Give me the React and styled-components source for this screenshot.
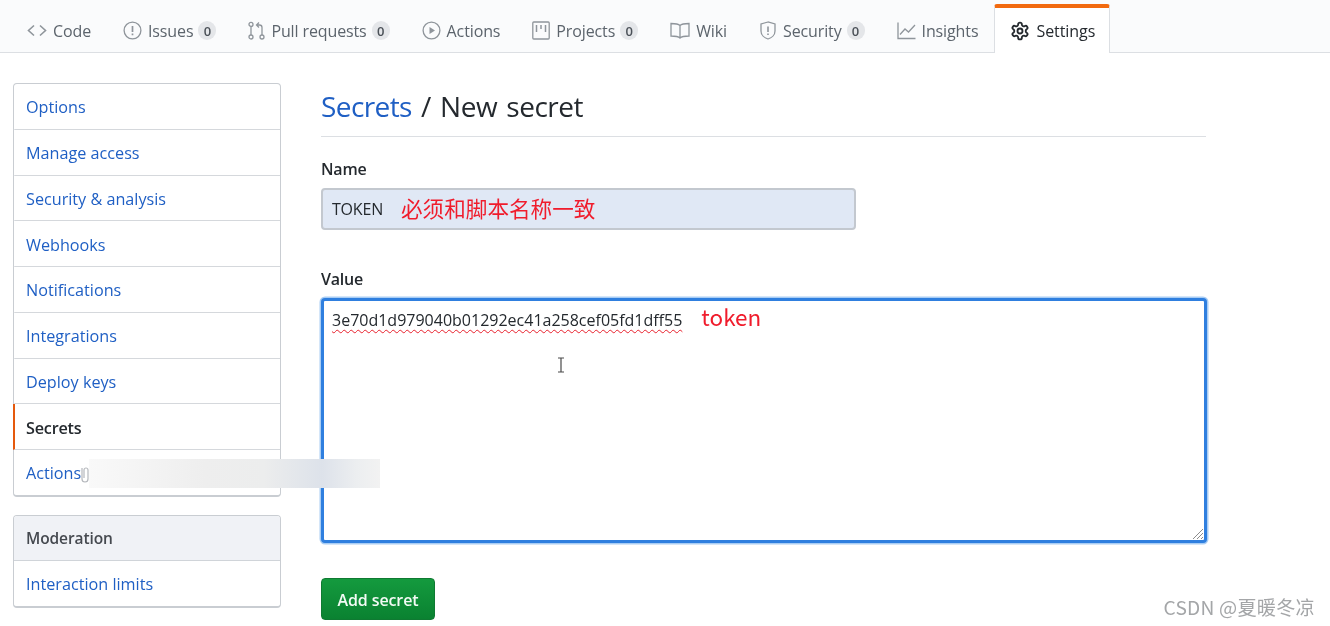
import React from "react";
import styled, { createGlobalStyle } from "styled-components";

const Global = createGlobalStyle`
  html, body { margin: 0; padding: 0; background: #fff; }
  body { width: 1330px; height: 626px; overflow: hidden; font-family: "Open Sans", "Noto Sans CJK SC", sans-serif; }
  * { box-sizing: border-box; }
`;
const Page = styled.div`position: relative; width: 1330px; height: 626px; overflow: hidden; background: #fff; filter: blur(.35px);`;
const TabBar = styled.nav`
  display: flex; align-items: flex-end; height: 53px; padding-left: 11px;
  background: #fafbfc; border-bottom: 1px solid #dcdfe3;
`;
const Tab = styled.div`
  display: flex; align-items: center; height: ${p => p.$active ? "49px" : "52px"};
  padding: ${p => p.$active ? "0 14px 0 15px" : "9px 16px 0"}; gap: 5px;
  margin-bottom: ${p => p.$active ? "-1px" : "0"};
  font-size: 16px; letter-spacing: ${p => p.$active ? "-.05px" : "-.12px"}; color: ${p => p.$active ? "#24292e" : "#5c646c"};
  background: ${p => p.$active ? "#fff" : "transparent"};
  border: ${p => p.$active ? "1px solid #dcdfe3" : "0"};
  border-top: ${p => p.$active ? "4px solid #f26a0f" : "0"};
  border-bottom: 0; border-radius: ${p => p.$active ? "3px 3px 0 0" : "0"};
`;
const TabIcon = styled.svg`width: ${p => p.$w || 19}px; height: ${p => p.$active ? 20 : 19}px; flex: none; color: ${p => p.$active ? "#24292e" : "#8f959b"}; margin-right: 1px;`;
const Badge = styled.span`
  display: inline-flex; align-items: center; justify-content: center; width: 18px; height: 19px;
  border-radius: 10px; background: #e4e6e9; color: #4b5158; font-size: 13px; font-weight: 600; letter-spacing: 0;
`;
const Body = styled.div`display: flex; align-items: flex-start; padding: 30px 0 0 13px; gap: 40px;`;
const Side = styled.aside`display: flex; flex-direction: column; gap: 18px; width: 268px; flex: none;`;
const Menu = styled.div`border: 1px solid #c9cdd2; border-bottom-width: 2px; border-radius: 4px; background: #fff;`;
const MenuHead = styled.div`
  height: 45px; padding: 0 12px; display: flex; align-items: center; background: #f0f2f6;
  font-size: 15.5px; font-weight: 600; letter-spacing: -.1px; color: #45494f; border-bottom: 1px solid #d0d4d9; border-radius: 3px 3px 0 0;
`;
const MenuItem = styled.div`
  height: ${p => p.$last ? 45 : 45.75}px; padding: ${p => p.$last ? "0" : "2px"} 11px 0; display: flex; align-items: center;
  font-size: 16.2px; font-weight: ${p => p.$active ? 600 : 400}; letter-spacing: ${p => p.$active ? "-.2px" : "0"};
  color: ${p => p.$active ? "#24292e" : "#1f5fc4"};
  border-bottom: ${p => p.$last ? "0" : "1px solid #d5d8dc"};
  border-left: 2px solid ${p => p.$active ? "#e5590d" : "transparent"};
  margin-left: -1px;
`;
const Main = styled.main`width: 885px; flex: none; display: flex; flex-direction: column; align-items: flex-start;`;
const Title = styled.h1`
  width: 100%; margin: 0 0 22px; padding: 0 0 10px; height: 54px; line-height: 47px; font-size: 28px; font-weight: 400;
  letter-spacing: -.5px; word-spacing: 2.5px; color: #24292e; border-bottom: 1px solid #dcdfe3;
`;
const TitleLink = styled.span`color: #1f5fc4; letter-spacing: -.6px;`;
const Label = styled.div`font-size: 16px; font-weight: 600; letter-spacing: -.2px; color: #24292e; line-height: 20px; height: 20px; margin-bottom: 9px;`;
const NameField = styled.div`
  width: 535px; height: 42px; margin-bottom: 39px; padding: 0 9px; display: flex; align-items: center;
  background: #e0e8f5; border: 2px solid #c3c8cf; border-radius: 4px; font-size: 16px; letter-spacing: -.2px; color: #24292e;
`;
const Note = styled.span`
  color: #f01c2c; font-family: "Noto Sans CJK SC", sans-serif; font-size: ${p => p.$size || 21.6}px; letter-spacing: 0;
  margin: ${p => p.$mt || 0}px 0 ${p => p.$mb || 0}px ${p => p.$gap}px; line-height: 1;
`;
const ValueField = styled.div`
  position: relative; width: 886px; height: 245px; padding: 7px 8px; margin-bottom: 35px; display: flex; align-items: flex-start;
  background: #fff; border: 3px solid #2f7fdf; border-radius: 4px;
  box-shadow: 0 0 0 1.5px #a9cdf4; font-size: 16px; color: #24292e;
`;
const Token = styled.span`text-decoration: underline wavy #e8202c 1px; text-underline-offset: 3px; line-height: 24px;`;
const Grip = styled.svg`position: absolute; right: 0; bottom: 0; width: 12px; height: 12px; color: #8c8c8c;`;
const Caret = styled.svg`position: absolute; left: 233px; top: 56px; width: 8px; height: 16px; color: #4a4a4a;`;
const Button = styled.div`
  width: 114px; height: 42px; padding-top: 1px; display: flex; align-items: center; justify-content: center;
  background: linear-gradient(#149a3e, #0a8231); border: 1px solid #0f7a32; border-radius: 4px;
  color: #f3fbf5; font-size: 16px; font-weight: 600; letter-spacing: -.1px;
`;
const BlurPatch = styled.div`
  position: absolute; left: 89px; top: 459px; width: 291px; height: 29px;
  background: linear-gradient(90deg, #f9f9f9, #eeeeee 40%, #eceded 60%, #dde2ea 80%, #eceef0 92%, #f2f2f2);
`;
const Clip = styled.svg`position: absolute; left: 80px; top: 465px; width: 10px; height: 20px; color: #b5b8bd;`;
const Watermark = styled.div`
  position: absolute; right: 15px; top: 596px; font-family: "Noto Sans CJK SC", sans-serif; font-size: 19.2px; letter-spacing: .2px; color: #a4a6a8; line-height: 22px;
`;

const S = { fill: "none", stroke: "currentColor", strokeWidth: 1.3 };
const icons = {
  code: <TabIcon $w={20} viewBox="0 0 20 19" {...S} strokeWidth={1.6}><path d="M7 4.5 1.5 9.5 7 14.5M13 4.5l5.5 5-5.5 5"/></TabIcon>,
  issue: <TabIcon viewBox="0 0 19 19" {...S}><circle cx="9.5" cy="9.5" r="8.4"/><path d="M9.5 5v6M9.5 12.6v1.6" strokeWidth="1.7"/></TabIcon>,
  pull: <TabIcon $w={17} viewBox="0 0 17 19" {...S}><circle cx="3" cy="3.4" r="2"/><circle cx="3" cy="16" r="2"/><circle cx="14" cy="16" r="2"/><path d="M3 5.4V14M14 14V6.5a2.5 2.5 0 0 0-2.5-2.5H9M11 1.5 8.5 4l2.5 2.5"/></TabIcon>,
  play: <TabIcon viewBox="0 0 19 19" {...S}><circle cx="9.5" cy="9.5" r="8.4"/><path d="M7.5 6v7l5.5-3.5z" fill="currentColor" stroke="none"/></TabIcon>,
  project: <TabIcon $w={18} viewBox="0 0 18 19" {...S}><rect x=".8" y="1" width="16.4" height="17" rx="1"/><path d="M4.5 4v7M9 4v4M13.500 4v7" strokeWidth="1.5"/></TabIcon>,
  book: <TabIcon $w={20} viewBox="0 0 20 19" {...S}><path d="M10 4.500C8.500 3 6 2.500 1 2.500V15c5 0 7.500.500 9 2 1.500-1.500 4-2 9-2V2.500c-5 0-7.500.500-9 2zM10 4.500V17"/></TabIcon>,
  shield: <TabIcon $w={18} viewBox="0 0 18 19" {...S}><path d="M9 1 2 3v7c0 4 3.500 7 7 8 3.500-1 7-4 7-8V3z"/><path d="M9 5.500v5.500M9 12.500v1.500" strokeWidth="1.600"/></TabIcon>,
  graph: <TabIcon $w={19} viewBox="0 0 19 19" {...S}><path d="M1 1.500V17.500H18.500"/><path d="M3 13.500 8 8l3.500 3 6.500-7"/></TabIcon>,
  gear: <TabIcon $active $w={20} viewBox="0 0 24 24" fill="none" stroke="currentColor" strokeWidth="2.2"><path d="M12.22 2h-.44a2 2 0 0 0-2 2v.18a2 2 0 0 1-1 1.730l-.43.25a2 2 0 0 1-2 0l-.15-.08a2 2 0 0 0-2.730.73l-.22.38a2 2 0 0 0 .73 2.730l.15.1a2 2 0 0 1 1 1.720v.51a2 2 0 0 1-1 1.740l-.15.09a2 2 0 0 0-.73 2.730l.22.38a2 2 0 0 0 2.730.73l.15-.08a2 2 0 0 1 2 0l.43.25a2 2 0 0 1 1 1.730V20a2 2 0 0 0 2 2h.44a2 2 0 0 0 2-2v-.18a2 2 0 0 1 1-1.730l.43-.25a2 2 0 0 1 2 0l.15.08a2 2 0 0 0 2.730-.73l.22-.39a2 2 0 0 0-.73-2.730l-.15-.08a2 2 0 0 1-1-1.740v-.5a2 2 0 0 1 1-1.740l.15-.09a2 2 0 0 0 .73-2.730l-.22-.38a2 2 0 0 0-2.730-.73l-.15.08a2 2 0 0 1-2 0l-.43-.25a2 2 0 0 1-1-1.730V4a2 2 0 0 0-2-2z"/><circle cx="12" cy="12" r="3"/></TabIcon>,
};

const tabs = [
  ["code", "Code"], ["issue", "Issues", 0], ["pull", "Pull requests", 0], ["play", "Actions"],
  ["project", "Projects", 0], ["book", "Wiki"], ["shield", "Security", 0], ["graph", "Insights"],
];
const items = ["Options", "Manage access", "Security & analysis", "Webhooks", "Notifications", "Integrations", "Deploy keys"];

export default function App() {
  return (
    <Page>
      <Global />
      <TabBar>
        {tabs.map(([i, t, n]) => (
          <Tab key={t}>{icons[i]}<span>{t}</span>{n !== undefined && <Badge>{n}</Badge>}</Tab>
        ))}
        <Tab $active>{icons.gear}<span>Settings</span></Tab>
      </TabBar>
      <Body>
        <Side>
          <Menu>
            {items.map(t => <MenuItem key={t}>{t}</MenuItem>)}
            <MenuItem $active>Secrets</MenuItem>
            <MenuItem $last>Actions</MenuItem>
          </Menu>
          <Menu>
            <MenuHead>Moderation</MenuHead>
            <MenuItem $last>Interaction limits</MenuItem>
          </Menu>
        </Side>
        <Main>
          <Title><TitleLink>Secrets</TitleLink> / New secret</Title>
          <Label>Name</Label>
          <NameField>TOKEN<Note $gap={18} $mb={3}>必须和脚本名称一致</Note></NameField>
          <Label>Value</Label>
          <ValueField>
            <Token>3e70d1d979040b01292ec41a258cef05fd1dff55</Token>
            <Note $gap={19} $size={22.5} $mt={-3}>token</Note>
            <Caret viewBox="0 0 8 16" fill="none" stroke="currentColor" strokeWidth="1.2"><path d="M1 1h6M4 1v14M1 15h6"/></Caret>
            <Grip viewBox="0 0 12 12" fill="none" stroke="currentColor" strokeWidth="1"><path d="M1 11 11 1M5 11l6-6M9 11l2-2"/></Grip>
          </ValueField>
          <Button>Add secret</Button>
        </Main>
      </Body>
      <BlurPatch />
      <Clip viewBox="0 0 10 20" fill="none" stroke="currentColor" strokeWidth="1.2"><path d="M2 3v11a3 3 0 0 0 6 0V5a2 2 0 0 0-4 0v8"/></Clip>
      <Watermark>CSDN @夏暖冬凉</Watermark>
    </Page>
  );
}
